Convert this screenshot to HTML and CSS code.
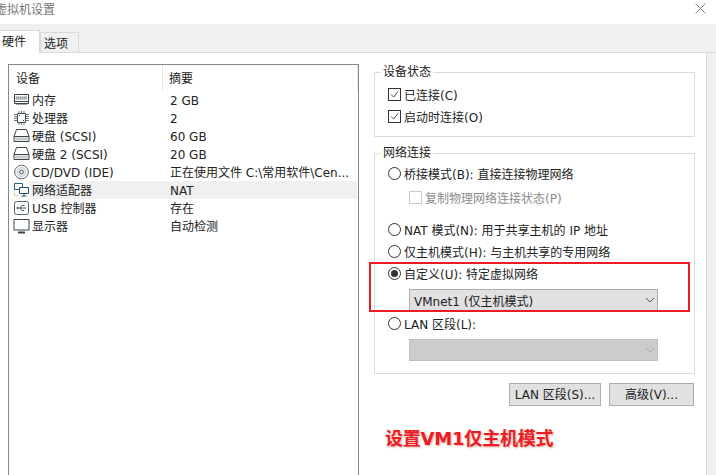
FILE: index.html
```html
<!DOCTYPE html>
<html lang="zh-CN">
<head>
    <meta charset="UTF-8">
    <title>虚拟机设置</title>
    <link rel="stylesheet" href="styles.css">
</head>
<body>
<svg class="icon-defs" width="0" height="0">
    <symbol id="i-mem" viewBox="0 0 17 16">
        <path d="M1.500 2.500h14v9h-14z" fill="#fff" stroke="#36454f"/>
        <path d="M3 4.500h11v3h-11z" fill="#8f9aa2"/>
        <path d="M4 6h1M6 6h1M8 6h1M10 6h1M12 6h1" stroke="#eee"/>
        <path d="M2 9.500h13" stroke="#36454f"/>
        <path d="M3 12.500h11" stroke="#9aa4ac"/>
    </symbol>
    <symbol id="i-cpu" viewBox="0 0 17 16">
        <path d="M4.500 3.500h8v9h-8z" fill="#fff" stroke="#3f4b54"/>
        <path d="M1 4.500h3M1 6.500h3M1 8.500h3M1 10.500h3M13 4.500h3M13 6.500h3M13 8.500h3M13 10.500h3M6 1v2M8.500 1v2M11 1v2M6 13v2M8.500 13v2M11 13v2" stroke="#6d7880"/>
        <path d="M6 5h1v1h-1zM10 10h1v1h-1z" fill="#333"/>
    </symbol>
    <symbol id="i-disk" viewBox="0 0 17 16">
        <path d="M3.500 1.500h10l2.500 7v5h-15v-5z" fill="#fff" stroke="#36454f"/>
        <path d="M1 8.500h15" stroke="#36454f"/>
        <path d="M2 9.500h13v3h-13z" fill="#c4cace"/>
    </symbol>
    <symbol id="i-cd" viewBox="0 0 17 16">
        <circle cx="8.500" cy="8" r="6.800" fill="#fff" stroke="#56626b"/>
        <circle cx="8.500" cy="8" r="4.500" fill="#e3e6e8" stroke="#c2c7cb"/>
        <circle cx="8.500" cy="8" r="1.800" fill="#fff" stroke="#48535b"/>
    </symbol>
    <symbol id="i-net" viewBox="0 0 17 16">
        <path d="M1.500 1.500h8v6h-8z" fill="#fff" stroke="#2c5f7e"/>
        <path d="M6.500 5.500h9v6h-9z" fill="#fff" stroke="#1f4f6d"/>
        <path d="M11 11.500v2M8.500 14h5" stroke="#1f4f6d"/>
        <path d="M1.500 9.500v4h3" fill="none" stroke="#e0a23c" stroke-dasharray="1 1"/>
    </symbol>
    <symbol id="i-usb" viewBox="0 0 17 16">
        <rect x="1.500" y="1.500" width="14" height="13" rx="2" fill="#fff" stroke="#55616a"/>
        <path d="M4 8h9M9 5.500h2.500M7 8l2-2.500M7 8l2 2.500h2" fill="none" stroke="#48535b"/>
        <path d="M3 8l2-1.500v3z" fill="#48535b"/>
    </symbol>
    <symbol id="i-mon" viewBox="0 0 17 16">
        <path d="M1 1.500h15v10.500h-15z" fill="#fff" stroke="#36454f"/>
        <path d="M5 14.500h7" stroke="#36454f" stroke-width="2"/>
        <path d="M7 12.500h3v1h-3z" fill="#8a96a0"/>
    </symbol>
    <symbol id="i-tick" viewBox="0 0 13 13">
        <path d="M2.500 6.500l3 3 5-6.500" fill="none" stroke="#444" stroke-width="1.100"/>
    </symbol>
    <symbol id="i-chev" viewBox="0 0 10 6">
        <path d="M1 1l4 4 4-4" fill="none" stroke="currentColor"/>
    </symbol>
</svg>

<div class="titlebar">
    <span class="title">虚拟机设置</span>
    <svg class="close" width="11" height="11" viewBox="0 0 11 11"><path d="M.5.500l10 10M10.500.500l-10 10" stroke="#888" fill="none"/></svg>
</div>

<div class="tabs">
    <div class="tab tab-active">硬件</div>
    <div class="tab">选项</div>
</div>

<div class="panel">
    <div class="device-list">
        <div class="list-head">
            <div class="head-cell head-name">设备</div>
            <div class="head-cell head-summary">摘要</div>
        </div>
        <div class="row"><svg class="row-icon"><use href="#i-mem"/></svg><div class="row-body"><span class="row-name">内存</span><span>2 GB</span></div></div>
        <div class="row"><svg class="row-icon"><use href="#i-cpu"/></svg><div class="row-body"><span class="row-name">处理器</span><span>2</span></div></div>
        <div class="row"><svg class="row-icon"><use href="#i-disk"/></svg><div class="row-body"><span class="row-name">硬盘 (SCSI)</span><span>60 GB</span></div></div>
        <div class="row"><svg class="row-icon"><use href="#i-disk"/></svg><div class="row-body"><span class="row-name">硬盘 2 (SCSI)</span><span>20 GB</span></div></div>
        <div class="row"><svg class="row-icon"><use href="#i-cd"/></svg><div class="row-body"><span class="row-name">CD/DVD (IDE)</span><span>正在使用文件 C:\常用软件\Cen...</span></div></div>
        <div class="row"><svg class="row-icon"><use href="#i-net"/></svg><div class="row-body row-selected"><span class="row-name">网络适配器</span><span>NAT</span></div></div>
        <div class="row"><svg class="row-icon"><use href="#i-usb"/></svg><div class="row-body"><span class="row-name">USB 控制器</span><span>存在</span></div></div>
        <div class="row"><svg class="row-icon"><use href="#i-mon"/></svg><div class="row-body"><span class="row-name">显示器</span><span>自动检测</span></div></div>
    </div>

    <div class="settings">
        <fieldset class="group group-status">
            <legend>设备状态</legend>
            <div class="opt"><span class="check"><svg width="11" height="11"><use href="#i-tick"/></svg></span>已连接(C)</div>
            <div class="opt"><span class="check"><svg width="11" height="11"><use href="#i-tick"/></svg></span>启动时连接(O)</div>
        </fieldset>

        <fieldset class="group group-net">
            <legend>网络连接</legend>
            <div class="opt"><span class="radio"></span>桥接模式(B): 直接连接物理网络</div>
            <div class="opt opt-sub opt-disabled"><span class="check check-off"></span>复制物理网络连接状态(P)</div>
            <div class="opt"><span class="radio"></span>NAT 模式(N): 用于共享主机的 IP 地址</div>
            <div class="opt"><span class="radio"></span>仅主机模式(H): 与主机共享的专用网络</div>
            <div class="opt"><span class="radio radio-on"></span>自定义(U): 特定虚拟网络</div>
            <div class="select">VMnet1 (仅主机模式)<svg class="chev" width="10" height="6"><use href="#i-chev"/></svg></div>
            <div class="opt opt-lan"><span class="radio"></span>LAN 区段(L):</div>
            <div class="select select-off"><svg class="chev" width="10" height="6"><use href="#i-chev"/></svg></div>
        </fieldset>

        <div class="buttons">
            <button class="btn btn-lan">LAN 区段(S)...</button>
            <button class="btn btn-adv">高级(V)...</button>
        </div>

        <div class="note">设置VM1仅主机模式</div>
        <div class="highlight"></div>
    </div>
</div>
</body>
</html>
```

FILE: styles.css
```css
* {
    box-sizing: border-box;
}

body {
    margin: 0;
    width: 716px;
    height: 475px;
    overflow: hidden;
    background-color: #fff;
    font-family: "DejaVu Sans", "Noto Sans CJK SC", sans-serif;
    font-size: 12px;
    color: #222;
}

.icon-defs {
    position: absolute;
}

.titlebar {
    height: 24px;
    display: flex;
    justify-content: space-between;
    padding: 3px 10px 0 0;
}

.title {
    margin-left: -5px;
    color: #777;
    line-height: 12px;
    padding-top: 0;
    margin-top: 1px;
}

.close {
    display: block;
}

.tabs {
    height: 29px;
    display: flex;
    align-items: flex-end;
    background-color: #f0f0f0;
    border-bottom: 1px solid #d9d9d9;
}

.tab {
    width: 39px;
    height: 20px;
    padding-left: 3px;
    line-height: 22px;
    border: 1px solid #d9d9d9;
    border-bottom: none;
}

.tab-active {
    width: 40px;
    height: 23px;
    margin-bottom: -1px;
    padding-left: 2px;
    background-color: #fff;
    border-left: none;
    line-height: 23px;
    position: relative;
}

.panel {
    width: 707px;
    height: 422px;
    display: flex;
    gap: 15px;
    padding: 11px 0 0 8px;
    background-color: #fff;
    border-right: 1px solid #d9d9d9;
    box-shadow: 9px 0 0 #f0f0f0;
}

.device-list {
    width: 351px;
    height: 420px;
    border: 1px solid #828790;
    flex-shrink: 0;
}

.list-head {
    height: 26px;
    display: flex;
    padding-bottom: 1px;
}

.head-cell {
    padding-top: 3px;
    line-height: 22px;
    border-right: 1px solid #e5e5e5;
}

.head-name {
    width: 154px;
    padding-left: 7px;
}

.head-summary {
    width: 195px;
    padding-left: 6px;
}

.row {
    height: 18px;
    display: flex;
    align-items: center;
}

.row-icon {
    width: 17px;
    height: 16px;
    margin-left: 4px;
    flex-shrink: 0;
}

.row-body {
    flex: 1;
    height: 18px;
    display: flex;
    line-height: 20px;
    margin-right: 1px;
}

.row-selected {
    background-color: #f0f0f0;
}

.row-name {
    width: 140px;
    padding-left: 2px;
}

.settings {
    position: relative;
    width: 321px;
}

.group {
    margin: 0;
    padding: 0 0 0 13px;
    border: 1px solid #dcdcdc;
    min-width: 0;
}

.group legend {
    margin-left: -7px;
    padding: 0 2px;
    line-height: 16px;
}

.group-status {
    height: 73px;
    margin-bottom: 8px;
    padding-top: 3px;
}

.group-net {
    height: 229px;
    margin-bottom: 9px;
    padding-top: 1px;
}

.opt {
    height: 22px;
    display: flex;
    align-items: center;
    gap: 3px;
}

.opt-sub {
    margin-left: 21px;
    margin-top: 2px;
    margin-bottom: 10px;
}

.opt-disabled {
    color: #8c8c8c;
}

.opt-lan {
    margin-top: 1px;
}

.check {
    width: 13px;
    height: 13px;
    display: flex;
    align-items: center;
    justify-content: center;
    border: 1px solid #333;
    background-color: #fff;
}

.check-off {
    border-color: #ccc;
}

.radio {
    width: 13px;
    height: 13px;
    display: flex;
    align-items: center;
    justify-content: center;
    border: 1px solid #333;
    border-radius: 50%;
}

.radio-on::after {
    content: "";
    width: 7px;
    height: 7px;
    border-radius: 50%;
    background-color: #333;
}

.select {
    width: 249px;
    height: 22px;
    margin-top: 5px;
    margin-left: 21px;
    padding: 0 4px;
    display: flex;
    align-items: center;
    justify-content: space-between;
    background-color: #e1e1e1;
    border: 1px solid #adadad;
    color: #222;
}

.select-off {
    justify-content: flex-end;
    background-color: #ccc;
    border-color: #bfbfbf;
}

.chev {
    margin-right: -2px;
    color: #555;
}

.select-off .chev {
    color: #aaa;
}

.buttons {
    display: flex;
    justify-content: flex-end;
    gap: 8px;
    padding-right: 1px;
}

.btn {
    height: 23px;
    padding: 0 0 2px;
    font: inherit;
    color: #222;
    background-color: #e1e1e1;
    border: 1px solid #adadad;
}

.btn-lan {
    width: 92px;
}

.btn-adv {
    width: 85px;
}

.note {
    margin-top: 22px;
    margin-left: 11px;
    font-family: "DejaVu Sans", "Noto Sans CJK SC", sans-serif;
    font-size: 18px;
    font-weight: bold;
    letter-spacing: -0.2px;
    line-height: 22px;
    color: #ed1c24;
    text-shadow: 1px 1px 2px rgba(190, 90, 70, 0.5);
}

.highlight {
    position: absolute;
    left: -5px;
    top: 198px;
    width: 321px;
    height: 50px;
    border: 2px solid #ed1c24;
}
```
